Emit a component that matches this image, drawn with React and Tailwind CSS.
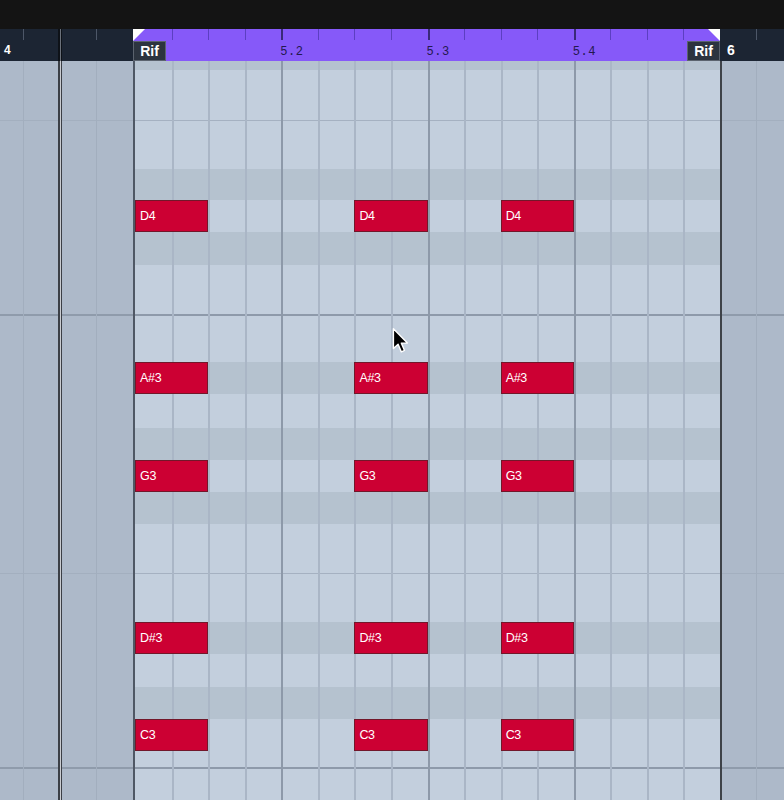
import React from "react";

const ROWS = [
  { h: "h-[9px]", t: "d" },
  { h: "h-[50px]", t: "l" },
  { h: "h-[1px]", t: "line1" },
  { h: "h-[48px]", t: "l" },
  { h: "h-[31px]", t: "d" },
  { h: "h-[32px]", t: "l", note: "D4" },
  { h: "h-[33px]", t: "d" },
  { h: "h-[49px]", t: "l" },
  { h: "h-[2px]", t: "line2" },
  { h: "h-[46px]", t: "l" },
  { h: "h-[32px]", t: "d", note: "A#3" },
  { h: "h-[34px]", t: "l" },
  { h: "h-[32px]", t: "d" },
  { h: "h-[32px]", t: "l", note: "G3" },
  { h: "h-[32px]", t: "d" },
  { h: "h-[49px]", t: "l" },
  { h: "h-[1px]", t: "line1" },
  { h: "h-[48px]", t: "l" },
  { h: "h-[32px]", t: "d", note: "D#3" },
  { h: "h-[33px]", t: "l" },
  { h: "h-[32px]", t: "d" },
  { h: "h-[32px]", t: "l", note: "C3" },
  { h: "h-[16px]", t: "l" },
  { h: "h-[2px]", t: "line2" },
  { h: "h-[31px]", t: "l" },
];

const NOTE_STARTS = [0, 6, 10];

function outerBg(t) {
  if (t === "line1") return "bg-[#a3afbf]";
  if (t === "line2") return "bg-[#8f9bab]";
  return "bg-[#adb9c9]";
}
function regionBg(t) {
  if (t === "line1") return "bg-[#a5b1c1]";
  if (t === "line2") return "bg-[#8e9aaa]";
  if (t === "d") return "bg-[#b5c2cf]";
  return "bg-[#c3cfdd]";
}

function Note({ label }) {
  return (
    <div className="col-span-2 flex items-center bg-[#cc0033] border border-[#72172a] pl-[4px] text-white text-[12.5px] font-['Liberation_Sans',Arial,sans-serif] leading-none tracking-[-0.3px]">
      {label}
    </div>
  );
}

function Row({ row }) {
  const cells = [];
  for (let i = 0; i < 16; i++) {
    if (row.note && NOTE_STARTS.includes(i)) {
      cells.push(<Note key={i} label={row.note} />);
      i++;
      continue;
    }
    let cls = "";
    if (i === 0) cls = "";
    else if (i % 4 === 0) cls = "border-l-2 border-[#8d99a9]";
    else cls = "border-l-2 border-[#aab6c6]";
    cells.push(<div key={i} className={cls} />);
  }
  const ob = outerBg(row.t);
  return (
    <div className={`flex ${row.h} shrink-0`}>
      <div className={`flex w-[133px] shrink-0 ${ob}`}>
        <div className="w-[24px] border-r border-[#a2aebe]" />
        <div className="w-[34px]" />
        <div className="w-[4px] border-l-2 border-r border-[#3b3f46] bg-[#c9ccd1]" />
        <div className="w-[35px] border-r border-[#a2aebe]" />
        <div className="flex-1" />
      </div>
      <div
        className={`grid grid-cols-[repeat(16,minmax(0,1fr))] w-[589px] shrink-0 border-l-2 border-l-[#4f5865] border-r-2 border-r-[#3e4248] ${regionBg(row.t)}`}
      >
        {cells}
      </div>
      <div className={`flex flex-1 ${ob}`}>
        <div className="w-[35px] border-r border-[#a2aebe]" />
        <div className="flex-1" />
      </div>
    </div>
  );
}

function RifBox() {
  return (
    <div className="h-[20px] w-[33px] flex items-center justify-center bg-[#2c343f] border border-[#5b636e] text-white text-[14px] font-bold font-['Liberation_Sans',Arial,sans-serif] leading-none">
      Rif
    </div>
  );
}

function Ruler() {
  const ticks = [];
  for (let i = 0; i < 16; i++) {
    let cls = "h-[11px]";
    if (i === 0) cls += "";
    else if (i % 4 === 0) cls += " border-l-2 border-[#3a2a78]";
    else cls += " border-l border-[#5c3fc2]";
    ticks.push(<div key={i} className={cls} />);
  }
  const label =
    "text-[12px] font-['Liberation_Mono',monospace] tracking-[0.6px] text-[#24184f] leading-none ml-[-1px]";
  return (
    <div className="flex h-[32px] shrink-0">
      {/* left navy */}
      <div className="flex w-[133px] shrink-0 bg-[#1c2533]">
        <div className="w-[24px] flex flex-col justify-between">
          <div className="self-end w-[1px] h-[11px] bg-[#4d5768]" />
          <div className="pl-[4px] pb-[5px] text-white text-[12px] font-bold font-['Liberation_Sans',Arial,sans-serif] leading-none">
            4
          </div>
        </div>
        <div className="w-[34px]" />
        <div className="w-[4px] border-l-2 border-r border-[#0e1218] bg-[#6b717a]" />
        <div className="w-[35px] flex flex-col">
          <div className="self-end w-[1px] h-[11px] bg-[#4d5768]" />
        </div>
        <div className="flex-1" />
      </div>
      {/* purple */}
      <div className="relative w-[587px] shrink-0 bg-[#8659f9] flex flex-col">
        <div className="grid grid-cols-[repeat(16,minmax(0,1fr))] pl-[2px]">{ticks}</div>
        <div className="flex-1 grid grid-cols-4 items-end pl-[2px] pb-0">
          <div className="ml-[-2px] flex">
            <RifBox />
          </div>
          <div className="h-[20px] flex items-center pt-[2px]">
            <span className={label}>5.2</span>
          </div>
          <div className="h-[20px] flex items-center pt-[2px]">
            <span className={label}>5.3</span>
          </div>
          <div className="h-[20px] flex items-center justify-between">
            <span className={label + " mt-[2px]"}>5.4</span>
            <RifBox />
          </div>
        </div>
        <svg className="absolute left-0 top-0" width="12" height="12" viewBox="0 0 12 12">
          <polygon points="0,0 12,0 0,12" fill="#ffffff" />
        </svg>
        <svg className="absolute right-0 top-0" width="12" height="12" viewBox="0 0 12 12">
          <polygon points="0,0 12,0 12,12" fill="#ffffff" />
        </svg>
      </div>
      {/* right navy */}
      <div className="flex flex-1 bg-[#1c2533]">
        <div className="w-[37px] flex flex-col justify-between">
          <div className="self-end w-[1px] h-[11px] bg-[#4d5768]" />
          <div className="pl-[7px] pb-[4px] text-white text-[14px] font-bold font-['Liberation_Sans',Arial,sans-serif] leading-none">
            6
          </div>
        </div>
        <div className="flex-1" />
      </div>
    </div>
  );
}

export default function App() {
  return (
    <div className="relative w-[784px] h-[800px] overflow-hidden flex flex-col bg-[#adb9c9]">
      <div className="h-[29px] shrink-0 bg-[#141414]" />
      <Ruler />
      <div className="flex flex-col">
        {ROWS.map((r, i) => (
          <Row key={i} row={r} />
        ))}
      </div>
      <svg
        className="absolute left-[391px] top-[327px]"
        width="20"
        height="28"
        viewBox="0 0 16 24"
      >
        <path
          d="M1.5 1.5 L1.5 18.5 L5.5 14.8 L8.3 21.3 L11 20.1 L8.3 13.8 L13.5 13.8 Z"
          fill="#000000"
          stroke="#ffffff"
          strokeWidth="1.2"
          strokeLinejoin="round"
        />
      </svg>
    </div>
  );
}
